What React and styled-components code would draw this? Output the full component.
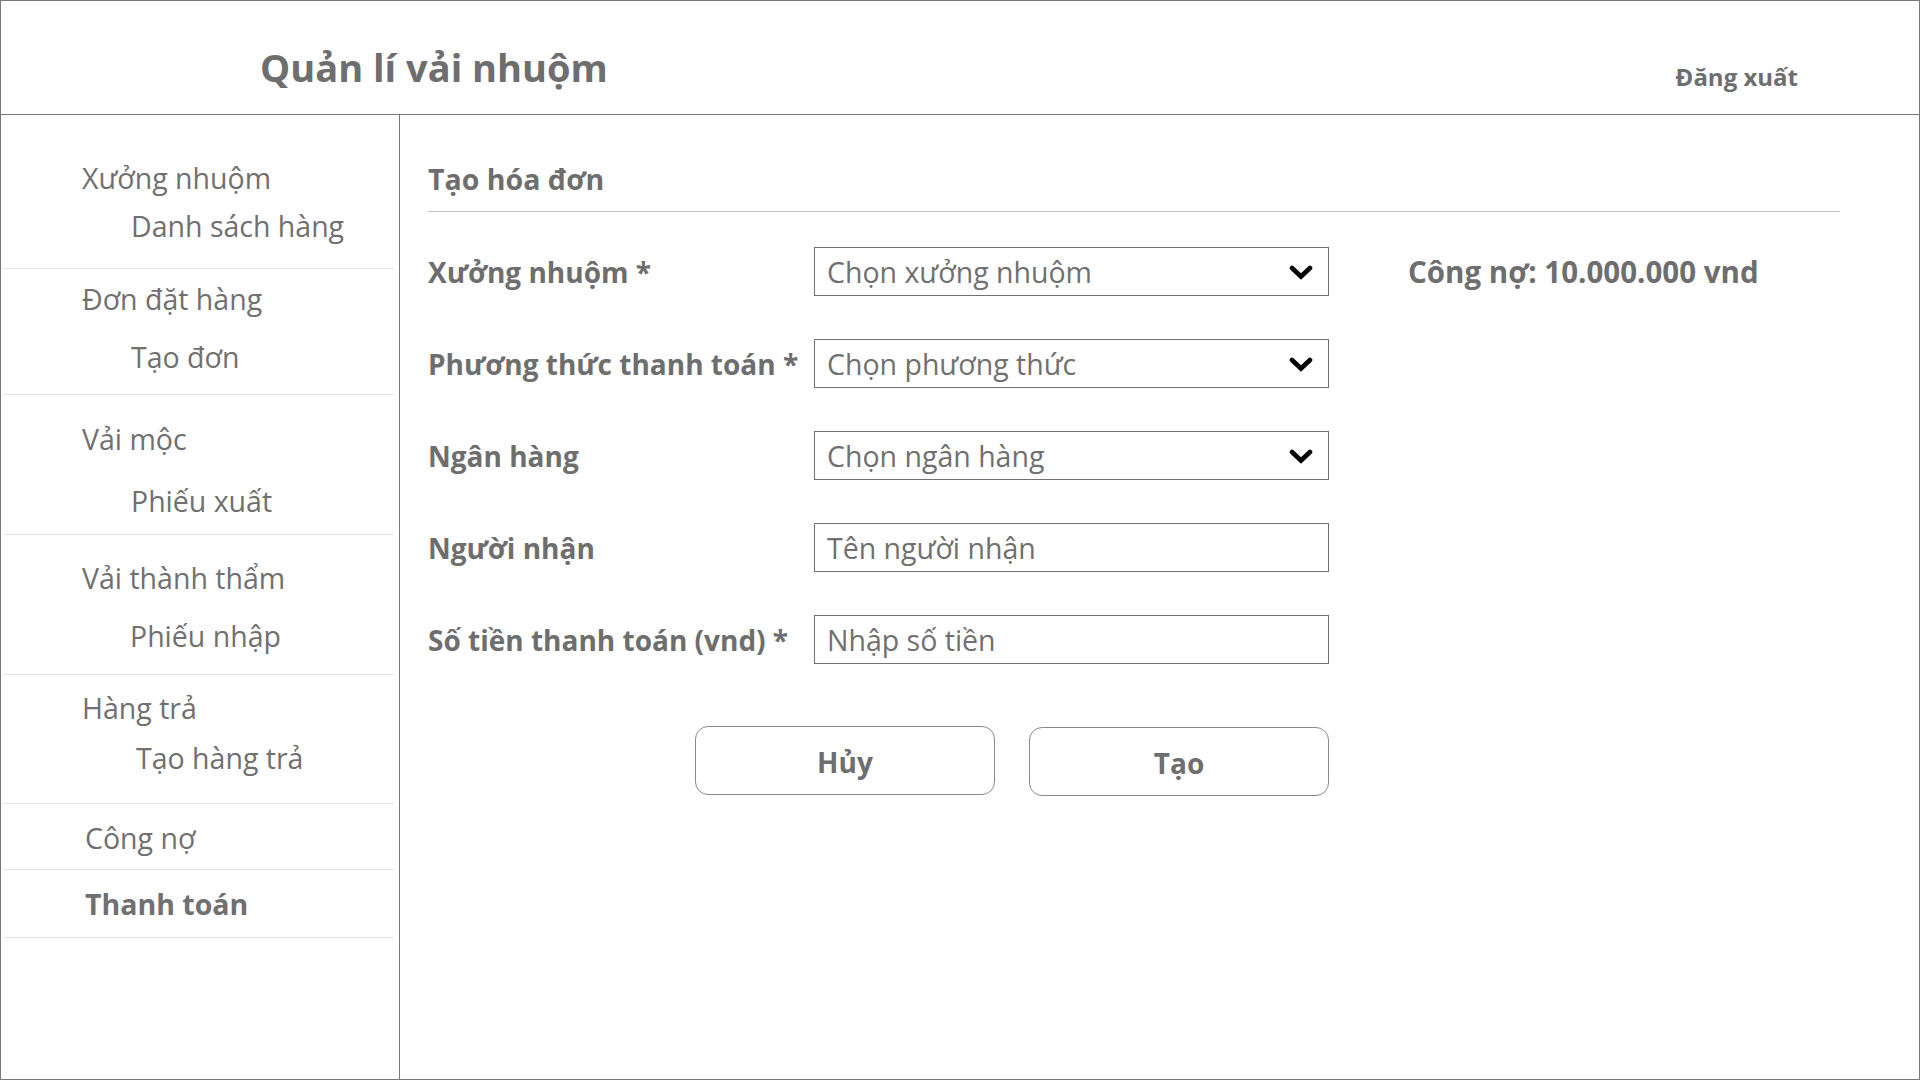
import React from 'react'
import styled, { createGlobalStyle } from 'styled-components'

const GlobalStyle = createGlobalStyle`
    * {
        box-sizing: border-box;
    }
    body {
        margin: 0;
        background: #ffffff;
        font-family: "Open Sans", "Noto Sans", sans-serif;
        color: #707070;
    }
`

const Page = styled.div`
    width: 1920px;
    height: 1080px;
    border: 1px solid #777777;
    display: grid;
    grid-template-rows: 114px 1fr;
    overflow: hidden;
`

const Header = styled.header`
    display: flex;
    align-items: flex-start;
    padding: 42px 0 0 259px;
    border-bottom: 1px solid #777777;
`

const Title = styled.h1`
    margin: 0;
    font-size: 38px;
    line-height: 48px;
    font-weight: 700;
    color: #6e6e6e;
`

const Logout = styled.a`
    margin: 18px 122px 0 auto;
    font-size: 24px;
    line-height: 32px;
    font-weight: 700;
    color: #6e6e6e;
    cursor: pointer;
`

const Body = styled.div`
    display: grid;
    grid-template-columns: 399px 1fr;
    min-height: 0;
`

const Sidebar = styled.nav`
    border-right: 1px solid #777777;
    display: flex;
    flex-direction: column;
`

const Group = styled.div`
    display: flex;
    flex-direction: column;
    gap: ${p => p.$gap || 0}px;
    padding: ${p => p.$pt}px 0 ${p => p.$pb}px;
    margin: 0 5px 0 3px;
    border-bottom: 1px solid #e3e3e3;
`

const MenuItem = styled.div`
    font-size: 28.5px;
    line-height: 40px;
    font-weight: ${p => (p.$active ? 700 : 400)};
    padding-left: ${p => p.$indent}px;
    color: #707070;
    white-space: nowrap;
`

const Main = styled.main`
    padding: 44px 80px 0 28px;
`

const Heading = styled.h2`
    margin: 0;
    width: 1412px;
    font-size: 28.5px;
    line-height: 40px;
    font-weight: 700;
    color: #6e6e6e;
    padding-bottom: 12px;
    border-bottom: 1px solid #c4c4c4;
`

const Form = styled.div`
    margin-top: 35px;
    display: grid;
    grid-template-columns: 386px 515px auto;
    grid-auto-rows: 49px;
    row-gap: 43px;
    align-items: center;
`

const Label = styled.label`
    grid-column: 1;
    font-size: 28px;
    line-height: 40px;
    font-weight: 700;
    color: #6e6e6e;
    white-space: nowrap;
`

const Field = styled.div`
    grid-column: 2;
    height: 49px;
    border: 1px solid #707070;
    display: flex;
    align-items: center;
    justify-content: space-between;
    padding: 0 15px 0 12px;
    font-size: 28.5px;
    color: #707070;
    background: #ffffff;
`

const TextInput = styled.input`
    grid-column: 2;
    height: 49px;
    width: 100%;
    border: 1px solid #707070;
    padding: 0 12px;
    font-family: inherit;
    font-size: 28.5px;
    color: #707070;
    outline: none;
    &::placeholder {
        color: #707070;
    }
`

const Debt = styled.div`
    grid-column: 3;
    grid-row: 1;
    margin-left: 79px;
    font-size: 29.5px;
    line-height: 40px;
    font-weight: 700;
    color: #6e6e6e;
    white-space: nowrap;
`

const Actions = styled.div`
    width: 901px;
    margin-top: 62px;
    display: flex;
    justify-content: flex-end;
    gap: 34px;
`

const Button = styled.button`
    width: 300px;
    height: 69px;
    border: 1px solid #8a8a8a;
    border-radius: 13px;
    background: #ffffff;
    font-family: inherit;
    font-size: 28px;
    font-weight: 700;
    color: #6e6e6e;
    cursor: pointer;
    padding-top: 3px;
    margin-top: ${p => p.$offset || 0}px;
`

const menu = [
    { title: 'Xưởng nhuộm', sub: 'Danh sách hàng', pt: 43, gap: 8, pb: 22, subIndent: 49 },
    { title: 'Đơn đặt hàng', sub: 'Tạo đơn', pt: 10, gap: 18, pb: 17, subIndent: 49 },
    { title: 'Vải mộc', sub: 'Phiếu xuất', pt: 24, gap: 22, pb: 13, subIndent: 49 },
    { title: 'Vải thành thẩm', sub: 'Phiếu nhập', pt: 23, gap: 18, pb: 18, subIndent: 48 },
    { title: 'Hàng trả', sub: 'Tạo hàng trả', pt: 13, gap: 10, pb: 25, subIndent: 54 },
    { title: 'Công nợ', pt: 14, pb: 11 },
    { title: 'Thanh toán', pt: 14, pb: 13, active: true },
]

function Chevron() {
    return (
        <svg width="24" height="16" viewBox="0 0 24 16">
            <polyline points="3,4 12,12.5 21,4" fill="none" stroke="#000000" strokeWidth="4.6" strokeLinecap="round" strokeLinejoin="miter" />
        </svg>
    )
}

function Select({ placeholder }) {
    return (
        <Field>
            <span>{placeholder}</span>
            <Chevron />
        </Field>
    )
}

function App() {
    return (
        <>
            <GlobalStyle />
            <Page>
                <Header>
                    <Title>Quản lí vải nhuộm</Title>
                    <Logout>Đăng xuất</Logout>
                </Header>
                <Body>
                    <Sidebar>
                        {menu.map(m => (
                            <Group key={m.title} $pt={m.pt} $gap={m.gap} $pb={m.pb}>
                                <MenuItem $indent={m.title === 'Công nợ' || m.active ? 81 : 78} $active={m.active}>
                                    {m.title}
                                </MenuItem>
                                {m.sub && <MenuItem $indent={78 + m.subIndent}>{m.sub}</MenuItem>}
                            </Group>
                        ))}
                    </Sidebar>
                    <Main>
                        <Heading>Tạo hóa đơn</Heading>
                        <Form>
                            <Label>Xưởng nhuộm *</Label>
                            <Select placeholder="Chọn xưởng nhuộm" />
                            <Debt>Công nợ: 10.000.000 vnd</Debt>

                            <Label>Phương thức thanh toán *</Label>
                            <Select placeholder="Chọn phương thức" />

                            <Label>Ngân hàng</Label>
                            <Select placeholder="Chọn ngân hàng" />

                            <Label>Người nhận</Label>
                            <TextInput placeholder="Tên người nhận" />

                            <Label>Số tiền thanh toán (vnd) *</Label>
                            <TextInput placeholder="Nhập số tiền" />
                        </Form>
                        <Actions>
                            <Button>Hủy</Button>
                            <Button $offset={1}>Tạo</Button>
                        </Actions>
                    </Main>
                </Body>
            </Page>
        </>
    )
}

export default App
